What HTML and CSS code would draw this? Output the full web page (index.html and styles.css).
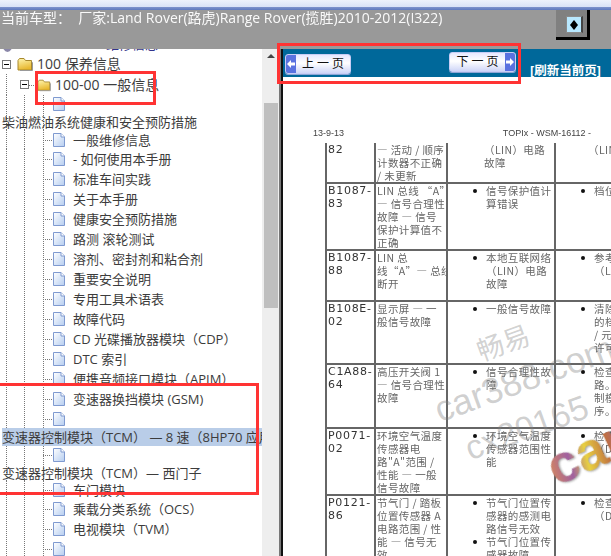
FILE: index.html
```html
<!DOCTYPE html>
<html lang="zh">
<head>
<meta charset="utf-8">
<title>车型手册</title>
<link rel="stylesheet" href="styles.css">
</head>
<body>
<svg class="defs" width="0" height="0" aria-hidden="true">
  <defs>
    <linearGradient id="pg" x1="0" y1="0" x2="1" y2="1"><stop offset="0" stop-color="#fff"/><stop offset="1" stop-color="#b5cdf0"/></linearGradient>
    <linearGradient id="fg" x1="0" y1="0" x2="0.3" y2="1"><stop offset="0" stop-color="#fff6b0"/><stop offset="1" stop-color="#e8b830"/></linearGradient>
    <symbol id="doc" viewBox="0 0 12 14"><path d="M.5.5H8L11.5 4V13.5H.5Z" fill="url(#pg)" stroke="#7f9ad0"/><path d="M8 .5V4H11.5" fill="#fff" stroke="#7f9ad0"/></symbol>
    <symbol id="folder" viewBox="0 0 16 14"><path d="M1 3.5 2.5 1.5H7L8.5 3.5H14.5V13H1Z" fill="url(#fg)" stroke="#a8882c"/><path d="M14.5 5 15.5 5.5V13.5H3" fill="none" stroke="#999"/></symbol>
  </defs>
</svg>
<div class="app">
  <div class="titlebar"></div>
  <header class="carbar">
    <div class="cartext">当前车型：&nbsp;&nbsp;厂家:Land Rover(路虎)Range Rover(揽胜)2010-2012(I322)</div>
    <button class="toggle" type="button" aria-label="切换"><span class="toggle-face"><svg width="10" height="10" viewBox="0 0 10 10"><path d="M5 0 9 5 5 10 1 5Z" fill="#000"/></svg></span></button>
  </header>
  <main class="body">
    <nav class="treepane">
      <div class="tree">
        <div class="row top"><span class="globe"></span><span class="label first">1000 维修信息</span></div>
        <div class="row"><span class="box b1"></span><svg class="ic f1"><use href="#folder"/></svg><span class="label l1">100 保养信息</span></div>
        <div class="row v1 h21"><span class="box b2"></span><span class="dash d2"></span><svg class="ic f2"><use href="#folder"/></svg><span class="label l2">100-00 一般信息</span></div>
        <div class="row v2 h18"><svg class="ic p"><use href="#doc"/></svg></div>
        <div class="row v3 h17"><span class="label wide">柴油燃油系统健康和安全预防措施</span></div>
        <div class="row v3 h19"><span class="dash"></span><svg class="ic p"><use href="#doc"/></svg><span class="label">一般维修信息</span></div>
        <div class="row v3"><span class="dash"></span><svg class="ic p"><use href="#doc"/></svg><span class="label">- 如何使用本手册</span></div>
        <div class="row v3"><span class="dash"></span><svg class="ic p"><use href="#doc"/></svg><span class="label">标准车间实践</span></div>
        <div class="row v3"><span class="dash"></span><svg class="ic p"><use href="#doc"/></svg><span class="label">关于本手册</span></div>
        <div class="row v3"><span class="dash"></span><svg class="ic p"><use href="#doc"/></svg><span class="label">健康安全预防措施</span></div>
        <div class="row v3"><span class="dash"></span><svg class="ic p"><use href="#doc"/></svg><span class="label">路测 滚轮测试</span></div>
        <div class="row v3"><span class="dash"></span><svg class="ic p"><use href="#doc"/></svg><span class="label">溶剂、密封剂和粘合剂</span></div>
        <div class="row v3"><span class="dash"></span><svg class="ic p"><use href="#doc"/></svg><span class="label">重要安全说明</span></div>
        <div class="row v3"><span class="dash"></span><svg class="ic p"><use href="#doc"/></svg><span class="label">专用工具术语表</span></div>
        <div class="row v3"><span class="dash"></span><svg class="ic p"><use href="#doc"/></svg><span class="label">故障代码</span></div>
        <div class="row v3"><span class="dash"></span><svg class="ic p"><use href="#doc"/></svg><span class="label">CD 光碟播放器模块（CDP）</span></div>
        <div class="row v3"><span class="dash"></span><svg class="ic p"><use href="#doc"/></svg><span class="label">DTC 索引</span></div>
        <div class="row v3"><span class="dash"></span><svg class="ic p"><use href="#doc"/></svg><span class="label">便携音频接口模块（APIM）</span></div>
        <div class="row v3"><span class="dash"></span><svg class="ic p"><use href="#doc"/></svg><span class="label">变速器换挡模块 (GSM)</span></div>
        <div class="row v3 h19"><span class="dash"></span><svg class="ic p"><use href="#doc"/></svg></div>
        <div class="row selected h18"><span class="label wide">变速器控制模块（TCM） — 8 速（8HP70 应用）</span></div>
        <div class="row v3 h18"><span class="dash"></span><svg class="ic p"><use href="#doc"/></svg></div>
        <div class="row v3 h17"><span class="label wide">变速器控制模块（TCM）— 西门子</span></div>
        <div class="row v3 h18"><span class="dash"></span><svg class="ic p"><use href="#doc"/></svg><span class="label">车门模块</span></div>
        <div class="row v3"><span class="dash"></span><svg class="ic p"><use href="#doc"/></svg><span class="label">乘载分类系统（OCS）</span></div>
        <div class="row v3"><span class="dash"></span><svg class="ic p"><use href="#doc"/></svg><span class="label">电视模块（TVM）</span></div>
        <div class="row v3"><span class="dash"></span><svg class="ic p"><use href="#doc"/></svg></div>
      </div>
      <div class="scrollbar"><span class="arrow"></span><span class="thumb"></span></div>
    </nav>
    <div class="divider"></div>
    <section class="content">
      <div class="pager">
        <button class="pagebtn prev" type="button"><span class="cap"><svg width="10" height="10" viewBox="0 0 10 10"><path d="M5 1 1 5 5 9V6.500H9V3.500H5Z" fill="#fff"/></svg></span><span class="btntext">上 一 页</span></button>
        <button class="pagebtn next" type="button"><span class="btntext">下 一 页</span><span class="cap"><svg width="10" height="10" viewBox="0 0 10 10"><path d="M5 1 9 5 5 9V6.500H1V3.500H5Z" fill="#fff"/></svg></span></button>
        <a class="refresh">[刷新当前页]</a>
      </div>
      <div class="page">
        <div class="pagehead"><span>13-9-13</span><span>TOPIx - WSM-16112 - </span></div>
        <table class="dtc">
          <colgroup><col class="c1"><col class="c2"><col class="c3"><col class="c4"></colgroup>
          <tr class="r40"><td class="code">82</td><td>— 活动 / 顺序<br>计数器不正确<br>/ 未更新</td><td class="plain">（LIN）电路<br>故障</td><td class="plain2">（LIN）</td></tr>
          <tr class="r66"><td class="code">B1087-<br>83</td><td>LIN 总线 “A”<br>— 信号合理性<br>故障 — 信号<br>保护计算值不<br>正确</td><td class="bul"><ul><li>信号保护值计<br>算错误</li></ul></td><td class="bul"><ul><li>档位</li></ul></td></tr>
          <tr class="r51"><td class="code">B1087-<br>88</td><td>LIN 总<br>线“A”— 总线<br>断开</td><td class="bul"><ul><li>本地互联网络<br>（LIN）电路<br>故障</li></ul></td><td class="bul"><ul><li>参考<br>（LIN</li></ul></td></tr>
          <tr class="r63"><td class="code">B108E-<br>02</td><td>显示屏 — 一<br>般信号故障</td><td class="bul"><ul><li>一般信号故障</li></ul></td><td class="bul"><ul><li>清除<br>的档<br>/ 元<br>许可</li></ul></td></tr>
          <tr class="r64"><td class="code">C1A88-<br>64</td><td>高压开关阀 1<br>— 信号合理性<br>故障</td><td class="bul"><ul><li>信号合理性故<br>障</li></ul></td><td class="bul"><ul><li>检查<br>路。<br>制模<br>序。</li></ul></td></tr>
          <tr class="r67"><td class="code">P0071-<br>02</td><td>环境空气温度<br>传感器电<br>路"A"范围 /<br>性能 — 一般<br>信号故障</td><td class="bul"><ul><li>环境空气温度<br>传感器范围性<br>能</li></ul></td><td class="bul"><ul><li>检查<br>（DT</li></ul></td></tr>
          <tr class="r70"><td class="code">P0121-<br>86</td><td>节气门 / 踏板<br>位置传感器 A<br>电路范围 / 性<br>能 — 信号无<br>效</td><td class="bul"><ul><li>节气门位置传<br>感器的感测电<br>路信号无效</li><li>节气门位置传<br>感器故障</li></ul></td><td class="bul"><ul><li>检查<br>（DT</li></ul></td></tr>
        </table>
        <span class="wm wm-cy">畅易</span>
        <span class="wm wm-car">car388.com</span>
        <span class="wm wm-cx">cx20165</span>
        <span class="wm-logo">car</span>
      </div>
    </section>
  </main>
  <span class="mark mark1"></span>
  <span class="mark mark2"></span>
  <span class="mark mark3"></span>
</div>
</body>
</html>
```
FILE: styles.css
```css
* { box-sizing: border-box; }
html, body { margin: 0; padding: 0; }
body { width: 611px; height: 556px; overflow: hidden; background: #fff; font-family: "Open Sans", "Noto Sans CJK SC", sans-serif; }
.defs { position: absolute; }
.app { position: relative; width: 611px; height: 556px; display: flex; flex-direction: column; overflow: hidden; }

.titlebar { height: 10px; flex: none; background: linear-gradient(#eef2fb, #d9e2f6 70%, #8094cc 70%, #5f79bd); }
.carbar { height: 39px; flex: none; background: #999; display: flex; align-items: flex-start; justify-content: space-between; padding-right: 21px; }
.cartext { color: #fff; font-size: 14px; line-height: 16px; padding: 0 0 0 1px; margin-top: 0; white-space: pre; opacity: .95; }
.toggle { width: 34px; height: 30px; padding: 5px 7px 6px 10px; border: 0; margin: 0; background: #808080; box-shadow: inset -3px -3px 0 #000; display: block; }
.toggle-face { display: flex; width: 17px; height: 17px; align-items: center; justify-content: center; background: #b8e8ff; border: 1px solid #8a8a8a; border-right: 2px solid #444; }

.body { flex: 1; display: flex; min-height: 0; }
.treepane { width: 279px; flex: none; display: flex; overflow: hidden; background: #fff; }
.tree { width: 262px; flex: none; margin-top: -15px; overflow: hidden; }
.scrollbar { width: 17px; flex: none; background: #eee; display: flex; flex-direction: column; align-items: center; }
.arrow { width: 0; height: 0; margin-top: 5px; border: 4px solid transparent; border-top: 0; border-bottom: 4px solid #444; }
.thumb { width: 14px; height: 205px; margin-top: 45px; background: #bfbfbf; }
.divider { width: 4px; flex: none; background: linear-gradient(90deg, #777 50%, #111 50%); }

.row { position: relative; display: flex; align-items: center; height: 20px; flex: none; font-size: 13px; line-height: 16px; color: #3c3c3c; white-space: nowrap;
  --dots: repeating-linear-gradient(#777 0 1px, transparent 1px 2px);
  background-repeat: no-repeat; background-size: 1px 100%; }
.top { height: 20px; }
.h17 { height: 17px; } .h18 { height: 18px; } .h19 { height: 19px; } .h21 { height: 21px; }
.v1 { background-image: var(--dots); background-position: 6px 0; }
.v2 { background-image: var(--dots), var(--dots), var(--dots); background-position: 6px 0, 24px 0, 43px 0; }
.v3 { background-image: var(--dots), var(--dots), var(--dots); background-position: 6px 0, 24px 0, 43px 0; }
.globe { position: absolute; left: 2px; top: 0; width: 11px; height: 18px; border-radius: 50%; background: #8a87a8; }
.first { position: absolute; left: 28px; top: 0; color: #33338a; }
.box { position: absolute; top: 6px; width: 9px; height: 9px; background: linear-gradient(#000, #000) center / 5px 1px no-repeat #fff; border: 1px solid #777; }
.b1 { left: 2px; }
.b2 { left: 20px; top: 6px; }
.dash { position: absolute; left: 43px; top: 50%; width: 10px; height: 1px; background: repeating-linear-gradient(90deg, #777 0 1px, transparent 1px 2px); }
.d2 { left: 29px; width: 8px; }
.ic { position: absolute; }
.p { left: 53px; top: 50%; width: 12px; height: 14px; margin-top: -7px; }
.f1 { left: 17px; top: 3px; width: 16px; height: 14px; }
.f2 { left: 37px; top: 4px; width: 14px; height: 14px; }
.label { position: absolute; left: 73px; top: 50%; transform: translateY(-50%); }
.l1 { left: 37px; font-size: 14px; }
.l2 { left: 55px; font-size: 14px; }
.wide { left: 2px; }
.selected { background: #b9cde8; margin-left: 2px; }
.selected .wide { left: 0; }

.content { flex: 1; min-width: 0; display: flex; flex-direction: column; overflow: hidden; background: #fff; }
.pager { position: relative; height: 28px; flex: none; background: #00689a; display: flex; align-items: flex-start; padding: 3px 0 0 2px; }
.pagebtn { display: flex; align-items: stretch; height: 20px; padding: 0; border: 1px solid #c8cdf5; border-radius: 3px; background: linear-gradient(#e6e8ff, #fff 45%, #cfd6f8); font-family: inherit; overflow: hidden; box-shadow: 0 1px 0 #8fa6d6; }
.prev { width: 66px; margin-top: 2px; }
.next { width: 67px; margin-left: 98px; }
.cap { width: 10px; flex: none; background: #5a72e0; display: flex; align-items: center; justify-content: center; }
.btntext { flex: 1; text-align: center; font-size: 12px; line-height: 17px; color: #111; white-space: pre; }
.refresh { margin: 11px 0 0 14px; font-size: 12.500px; line-height: 16px; font-weight: 700; color: #fff; white-space: nowrap; }

.page { position: relative; flex: 1; min-height: 0; overflow: hidden; padding: 49px 0 0 31px; color: #5a5a5a; }
.pagehead { display: flex; justify-content: space-between; width: 278px; margin-left: -1px; font-family: "Liberation Sans", sans-serif; font-size: 9px; line-height: 14px; height: 17px; color: #444; filter: blur(.3px); }
.dtc { table-layout: fixed; border-collapse: collapse; width: 379px; margin-left: 11px; font-family: "Noto Sans CJK SC", sans-serif; font-size: 10.500px; line-height: 13px; letter-spacing: .400px; color: #666; filter: blur(.45px); }
.c1 { width: 49px; } .c2 { width: 72px; } .c3 { width: 108px; } .c4 { width: 150px; }
.dtc td { border: 2px solid #666; padding: 0 0 0 1px; vertical-align: top; white-space: nowrap; overflow: hidden; }
.dtc tr:first-child td { border-top: 0; }
.r40 { height: 40px; } .r66 { height: 66px; } .r51 { height: 51px; } .r63 { height: 63px; } .r64 { height: 64px; } .r67 { height: 67px; } .r70 { height: 70px; }
.dtc .code { font-family: "DejaVu Sans", sans-serif; font-size: 11px; letter-spacing: .700px; color: #333; }
.plain { padding-left: 36px !important; }
.plain2 { padding-left: 32px !important; }
.dtc ul { margin: 0; padding: 0 0 0 37px; list-style: none; }
.dtc li { position: relative; }
.dtc li::before { content: ""; position: absolute; left: -13px; top: 5px; width: 4px; height: 4px; border-radius: 50%; background: #111; }

.wm { position: absolute; color: rgba(130,130,130,.38); white-space: nowrap; font-family: "Liberation Sans", sans-serif; transform: rotate(-20deg); transform-origin: left bottom; }
.wm-cy { left: 201px; top: 253px; font-size: 27px; font-family: "Noto Sans CJK SC", sans-serif; color: rgba(140,140,140,.4); }
.wm-car { left: 160px; top: 312px; font-size: 36px; }
.wm-cx { left: 190px; top: 352px; font-size: 34px; }
.wm-logo { position: absolute; left: 262px; top: 345px; font-family: "Liberation Sans", sans-serif; font-size: 54px; font-weight: 700; line-height: 60px; transform: rotate(-25deg); background: linear-gradient(100deg, #e09050, #a060a0 30%, #e8d040 50%, #c07040 75%, #a060a0); -webkit-background-clip: text; background-clip: text; color: transparent; filter: drop-shadow(1px 1px 1px rgba(0,0,0,.4)); }

.mark { position: absolute; border: 3px solid #f33; pointer-events: none; }
.mark1 { left: 35px; top: 71px; width: 121px; height: 34px; }
.mark2 { left: 277px; top: 43px; width: 244px; height: 41px; }
.mark3 { left: -3px; top: 383px; width: 262px; height: 112px; }
```
